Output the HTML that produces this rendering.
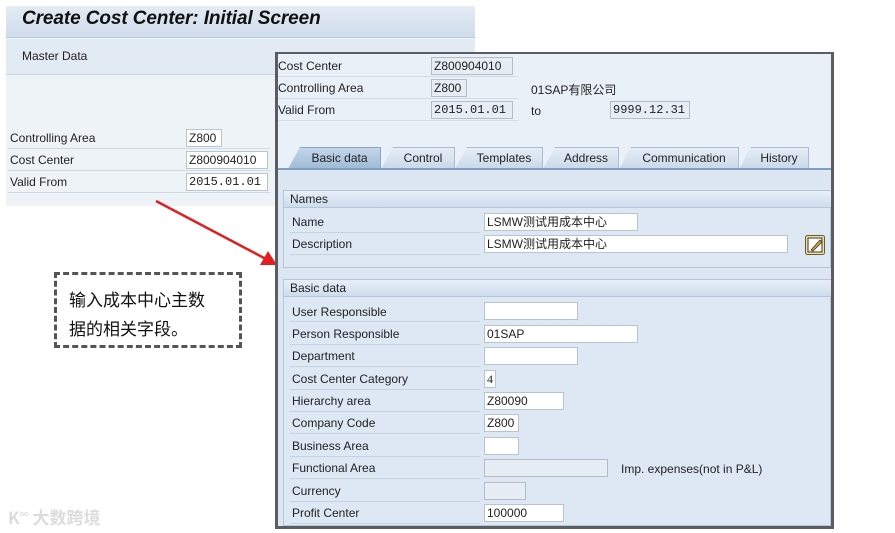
<!DOCTYPE html>
<html><head><meta charset="utf-8"><style>
*{margin:0;padding:0;box-sizing:border-box}
body{width:895px;height:533px;background:#fff;position:relative;overflow:hidden;font-family:"Liberation Sans","Noto Sans CJK SC",sans-serif;font-size:12px;color:#222}
.a{position:absolute}
.in{position:absolute;background:#fff;border:1px solid #b8c4d0;height:18px;line-height:16px;padding-left:2px;font-size:12px;white-space:nowrap;overflow:hidden}
.ro{background:#e6edf4;border-color:#b4bcc6}
.mono{font-family:"Liberation Mono",monospace;font-size:12px}
.lbl{position:absolute;white-space:nowrap;font-size:12px}
.row{position:absolute;height:22px;border-bottom:1px solid #d0d8e0}
.tab{position:absolute;top:147px;height:22px;background:linear-gradient(#e6eef6,#c9d8e8);border:1px solid #a8bccf;border-bottom:none;clip-path:polygon(12px 0,100% 0,100% 100%,0 100%);text-align:center;line-height:21px;font-size:12px;padding-left:10px}
</style></head><body>
<div class="a" style="left:6px;top:6px;width:469px;height:200px;background:#eef3f8"></div>
<div class="a" style="left:6px;top:6px;width:469px;height:32px;background:linear-gradient(#e4ecf4,#cfdceb);border-bottom:1px solid #b8c8d8"></div>
<div class="a" style="left:22px;top:8px;font-size:19px;font-weight:bold;font-style:italic;color:#111;letter-spacing:-0.1px">Create Cost Center: Initial Screen</div>
<div class="a" style="left:6px;top:39px;width:469px;height:36px;background:#e2eaf3;border-bottom:1px solid #c8d4e0"></div>
<div class="lbl" style="left:22px;top:49px">Master Data</div>
<div class="row" style="left:8px;top:127px;width:262px"></div>
<div class="row" style="left:8px;top:149px;width:262px"></div>
<div class="row" style="left:8px;top:171px;width:262px"></div>
<div class="lbl" style="left:10px;top:131px">Controlling Area</div>
<div class="lbl" style="left:10px;top:153px">Cost Center</div>
<div class="lbl" style="left:10px;top:175px">Valid From</div>
<div class="in" style="left:186px;top:129px;width:36px">Z800</div>
<div class="in" style="left:186px;top:151px;width:82px">Z800904010</div>
<div class="in mono" style="left:186px;top:173px;width:82px">2015.01.01</div>

<svg class="a" style="left:150px;top:195px" width="130" height="75"><line x1="6" y1="6" x2="116" y2="64" stroke="#e02020" stroke-width="2.5"/><polygon points="127,70 110,70 118,56" fill="#e02020"/></svg>

<div class="a" style="left:54px;top:272px;width:188px;height:76px;border:3px dashed #555"></div>
<div class="a" style="left:69px;top:284px;font-size:17px;line-height:29px;font-family:'Noto Sans CJK SC',sans-serif;color:#111">输入成本中心主数<br>据的相关字段。</div>

<div class="a" style="left:8px;top:504px;font-size:17px;color:#dcdcdc;font-family:'Noto Sans CJK SC',sans-serif;font-weight:bold">K<sup style="font-size:9px">∞</sup> 大数跨境</div>

<div class="a" style="left:275px;top:52px;width:559px;height:477px;background:#e9f0f7;border:3px solid #5a5e62;border-top:2px solid #5a5e62"></div>
<div class="row" style="left:278px;top:55px;width:240px;border-color:#d4dbe3"></div>
<div class="row" style="left:278px;top:77px;width:240px;border-color:#d4dbe3"></div>
<div class="row" style="left:278px;top:99px;width:240px;border-color:#d4dbe3"></div>
<div class="lbl" style="left:278px;top:59px">Cost Center</div>
<div class="lbl" style="left:278px;top:81px">Controlling Area</div>
<div class="lbl" style="left:278px;top:103px">Valid From</div>
<div class="in ro" style="left:431px;top:57px;width:82px">Z800904010</div>
<div class="in ro" style="left:431px;top:79px;width:36px">Z800</div>
<div class="in ro mono" style="left:431px;top:101px;width:82px">2015.01.01</div>
<div class="lbl" style="left:531px;top:81px">01SAP有限公司</div>
<div class="lbl" style="left:531px;top:104px">to</div>
<div class="in ro mono" style="left:610px;top:101px;width:80px">9999.12.31</div>

<div class="tab" style="left:288px;width:93px;background:linear-gradient(#c4d6ea,#9fbad6);border-color:#8aa6c4">Basic data</div>
<div class="tab" style="left:381px;width:74px">Control</div>
<div class="tab" style="left:455px;width:88px">Templates</div>
<div class="tab" style="left:543px;width:76px">Address</div>
<div class="tab" style="left:619px;width:120px">Communication</div>
<div class="tab" style="left:739px;width:70px">History</div>
<div class="a" style="left:278px;top:168px;width:553px;height:358px;background:#dce7f3;border-top:2px solid #7f9fc2"></div>

<div class="a" style="left:283px;top:190px;width:548px;height:78px;border:1px solid #b4c6d8;background:#dde8f4"></div>
<div class="a" style="left:284px;top:191px;width:547px;height:17px;background:linear-gradient(#e8eff7,#cddced);border-bottom:1px solid #b4c6d8"></div>
<div class="lbl" style="left:290px;top:192px">Names</div>
<div class="row" style="left:290px;top:211px;width:190px;height:22px;border-color:#c4d2e0"></div>
<div class="row" style="left:290px;top:233px;width:190px;height:22px;border-color:#c4d2e0"></div>
<div class="lbl" style="left:292px;top:215px">Name</div>
<div class="lbl" style="left:292px;top:237px">Description</div>
<div class="in" style="left:484px;top:213px;width:154px">LSMW测试用成本中心</div>
<div class="in" style="left:484px;top:235px;width:304px">LSMW测试用成本中心</div>
<svg class="a" style="left:805px;top:235px" width="20" height="20"><rect x="0.5" y="0.5" width="19" height="19" rx="2" fill="#f4e2a4" stroke="#6a5a2a"/><rect x="3" y="3" width="14" height="14" fill="#fff" stroke="#333"/><path d="M6 15 L15 5 L17 7 L8 16 Z" fill="#e8a028" stroke="#333" stroke-width="0.8"/></svg>

<div class="a" style="left:283px;top:279px;width:548px;height:247px;border:1px solid #b4c6d8;background:#dde8f4"></div>
<div class="a" style="left:284px;top:280px;width:547px;height:17px;background:linear-gradient(#e8eff7,#cddced);border-bottom:1px solid #b4c6d8"></div>
<div class="lbl" style="left:290px;top:281px">Basic data</div>

<div class="row" style="left:290px;top:300px;width:190px;border-color:#c4d2e0"></div>
<div class="row" style="left:290px;top:323px;width:190px;border-color:#c4d2e0"></div>
<div class="row" style="left:290px;top:345px;width:190px;border-color:#c4d2e0"></div>
<div class="row" style="left:290px;top:368px;width:190px;border-color:#c4d2e0"></div>
<div class="row" style="left:290px;top:390px;width:190px;border-color:#c4d2e0"></div>
<div class="row" style="left:290px;top:412px;width:190px;border-color:#c4d2e0"></div>
<div class="row" style="left:290px;top:435px;width:190px;border-color:#c4d2e0"></div>
<div class="row" style="left:290px;top:457px;width:190px;border-color:#c4d2e0"></div>
<div class="row" style="left:290px;top:480px;width:190px;border-color:#c4d2e0"></div>
<div class="row" style="left:290px;top:502px;width:190px;border-color:#c4d2e0"></div>
<div class="lbl" style="left:292px;top:305px">User Responsible</div>
<div class="lbl" style="left:292px;top:327px">Person Responsible</div>
<div class="lbl" style="left:292px;top:349px">Department</div>
<div class="lbl" style="left:292px;top:372px">Cost Center Category</div>
<div class="lbl" style="left:292px;top:394px">Hierarchy area</div>
<div class="lbl" style="left:292px;top:416px">Company Code</div>
<div class="lbl" style="left:292px;top:439px">Business Area</div>
<div class="lbl" style="left:292px;top:461px">Functional Area</div>
<div class="lbl" style="left:292px;top:484px">Currency</div>
<div class="lbl" style="left:292px;top:506px">Profit Center</div>
<div class="in" style="left:484px;top:302px;width:94px"></div>
<div class="in" style="left:484px;top:325px;width:154px">01SAP</div>
<div class="in" style="left:484px;top:347px;width:94px"></div>
<div class="in" style="left:484px;top:370px;width:12px;font-family:'Liberation Serif',serif">4</div>
<div class="in" style="left:484px;top:392px;width:80px">Z80090</div>
<div class="in" style="left:484px;top:414px;width:35px">Z800</div>
<div class="in" style="left:484px;top:437px;width:35px"></div>
<div class="in ro" style="left:484px;top:459px;width:124px"></div>
<div class="lbl" style="left:621px;top:462px">Imp. expenses(not in P&amp;L)</div>
<div class="in ro" style="left:484px;top:482px;width:42px"></div>
<div class="in" style="left:484px;top:504px;width:80px">100000</div>
</body></html>
